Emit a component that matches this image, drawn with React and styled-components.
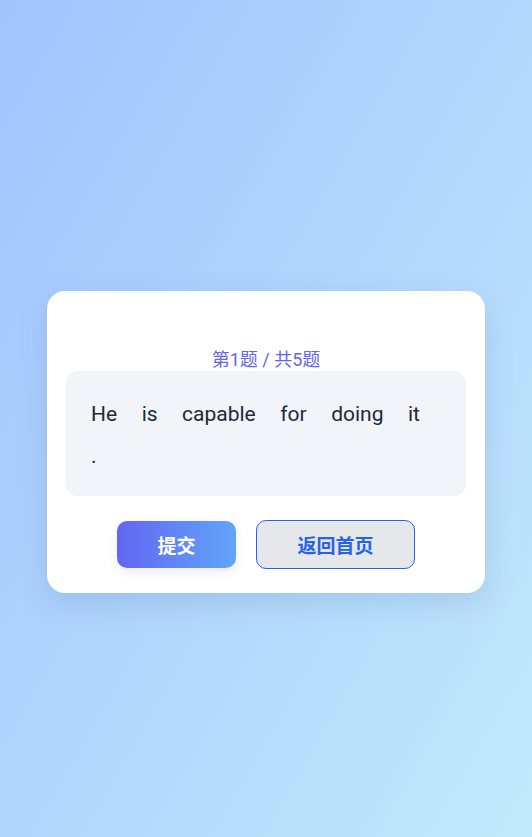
import React from "react";
import styled, { createGlobalStyle } from "styled-components";

const Global = createGlobalStyle`
  html, body { margin: 0; padding: 0; }
  body {
    font-family: Roboto, "Noto Sans CJK SC", sans-serif;
    background: linear-gradient(120deg, #a1c4fd 0%, #c2e9fb 100%);
    min-height: 100vh;
  }
  #root { min-height: 100vh; }
`;

const Page = styled.div`
  min-height: 837px;
  display: flex;
  justify-content: center;
  align-items: flex-start;
  padding-top: 291px;
  box-sizing: border-box;
`;

const Card = styled.div`
  width: 438px;
  box-sizing: border-box;
  background: #ffffff;
  border-radius: 18px;
  padding: 59px 19px 24px;
  box-shadow: 0 10px 30px rgba(60, 100, 160, 0.18);
  display: flex;
  flex-direction: column;
`;

const Progress = styled.div`
  text-align: center;
  color: #6366f1;
  font-size: 18px;
  line-height: 20px;
  margin-bottom: 1px;
`;

const Sentence = styled.div`
  background: #f1f4f8;
  border-radius: 12px;
  padding: 28px 24px 25px 25px;
  display: flex;
  flex-wrap: wrap;
  gap: 12px 24.5px;
`;

const Word = styled.span`
  font-size: 21px;
  line-height: 30px;
  color: #1e293b;
`;

const Actions = styled.div`
  display: flex;
  justify-content: center;
  align-items: center;
  gap: 20px;
  margin-top: 24px;
`;

const Button = styled.button`
  font-family: Roboto, "Noto Sans CJK SC", sans-serif;
  font-size: 19px;
  font-weight: 700;
  height: ${(p) => (p.$outline ? "49px" : "47px")};
  padding: 0 40.5px;
  border-radius: 10px;
  cursor: pointer;
  border: ${(p) => (p.$outline ? "1px solid #2563eb" : "none")};
  background: ${(p) =>
    p.$outline ? "#e5e7eb" : "linear-gradient(90deg, #6366f1 0%, #60a5fa 100%)"};
  color: ${(p) => (p.$outline ? "#2563eb" : "#ffffff")};
  box-shadow: ${(p) => (p.$outline ? "none" : "0 4px 10px rgba(99, 102, 241, 0.12)")};
`;

const words = ["He", "is", "capable", "for", "doing", "it", "."];

export default function App() {
  return (
    <>
      <Global />
      <Page>
        <Card>
          <Progress>第1题 / 共5题</Progress>
          <Sentence>
            {words.map((w, i) => (
              <Word key={i}>{w}</Word>
            ))}
          </Sentence>
          <Actions>
            <Button>提交</Button>
            <Button $outline>返回首页</Button>
          </Actions>
        </Card>
      </Page>
    </>
  );
}
